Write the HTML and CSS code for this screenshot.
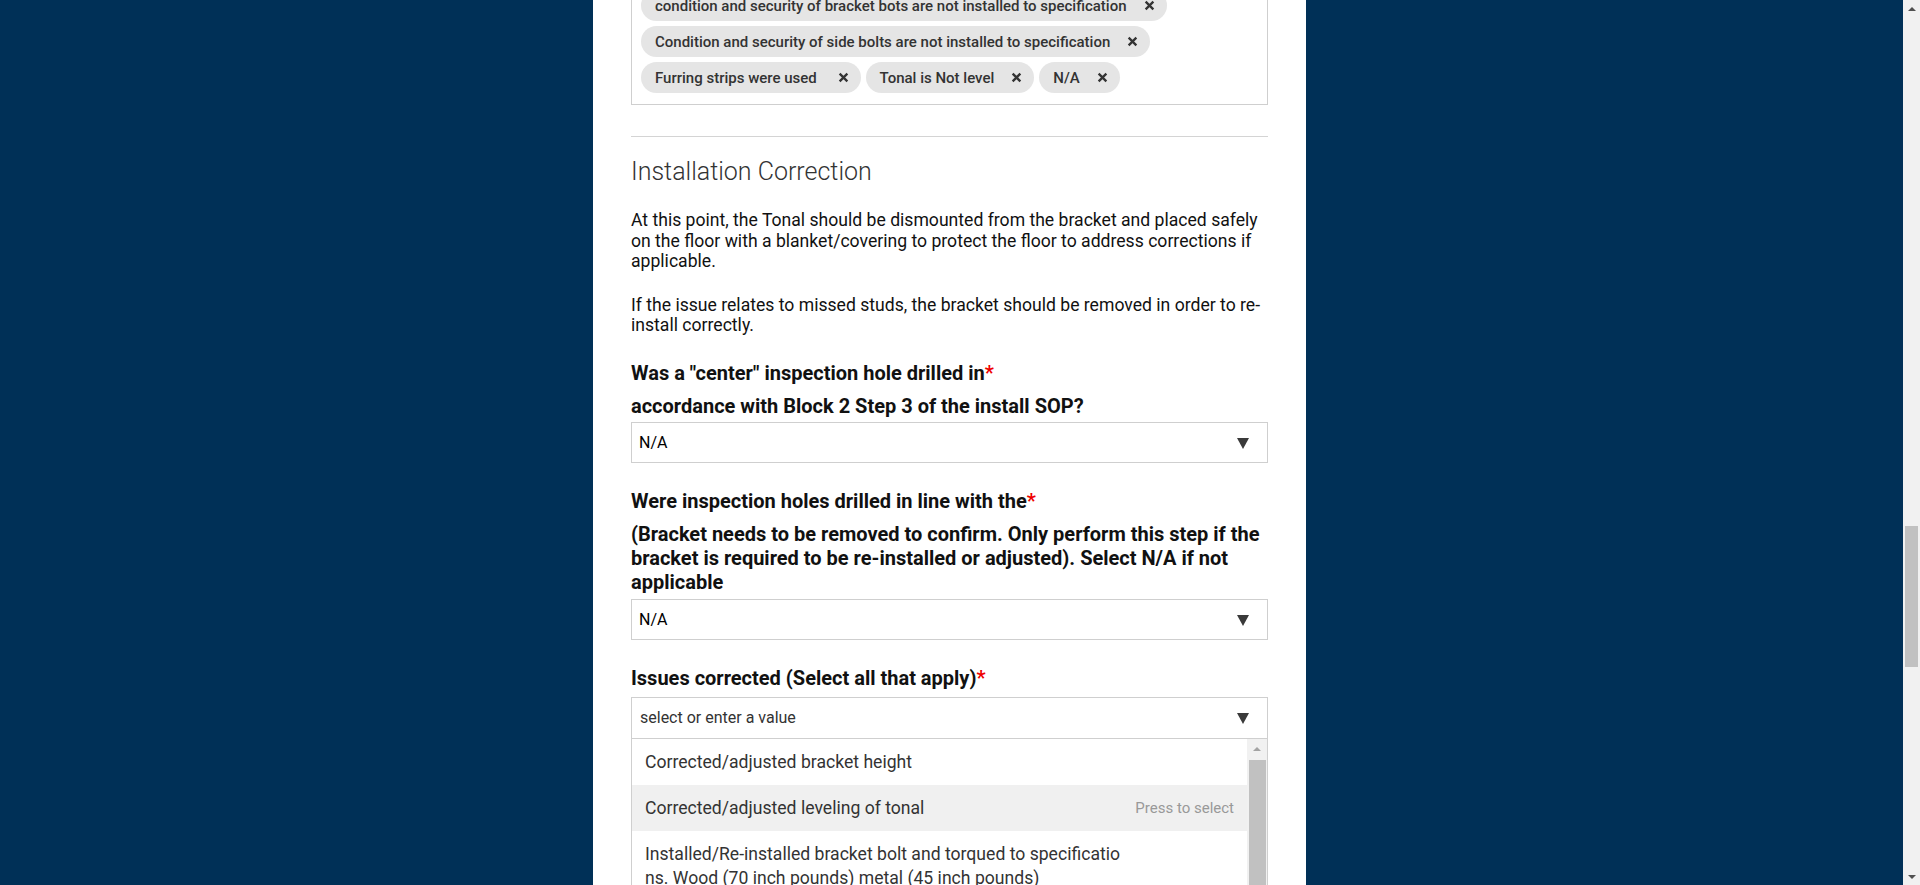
FILE: index.html
```html
<!DOCTYPE html>
<html lang="en">
<head>
<meta charset="utf-8">
<title>Installation Correction</title>
<link rel="stylesheet" href="styles.css">
</head>
<body>
<div class="page">
  <main class="panel">
    <div class="chipbox">
      <span class="chip">condition and security of bracket bots are not installed to specification<svg class="x" viewBox="0 0 10 10"><path d="M1.5 1.5L8.5 8.5M8.5 1.5L1.5 8.5"/></svg></span>
      <span class="chip">Condition and security of side bolts are not installed to specification<svg class="x" viewBox="0 0 10 10"><path d="M1.5 1.5L8.5 8.5M8.5 1.5L1.5 8.5"/></svg></span>
      <span class="chip">Furring strips were used&nbsp;<svg class="x" viewBox="0 0 10 10"><path d="M1.5 1.5L8.5 8.5M8.5 1.5L1.5 8.5"/></svg></span>
      <span class="chip">Tonal is Not level<svg class="x" viewBox="0 0 10 10"><path d="M1.5 1.5L8.5 8.5M8.5 1.5L1.5 8.5"/></svg></span>
      <span class="chip">N/A<svg class="x" viewBox="0 0 10 10"><path d="M1.5 1.5L8.5 8.5M8.5 1.5L1.5 8.5"/></svg></span>
    </div>

    <hr class="divider">

    <h2 class="section-title">Installation Correction</h2>
    <p class="intro">At this point, the Tonal should be dismounted from the bracket and placed safely on the floor with a blanket/covering to protect the floor to address corrections if applicable.</p>
    <p class="intro">If the issue relates to missed studs, the bracket should be removed in order to re-install correctly.</p>

    <div class="field">
      <div class="label">Was a "center" inspection hole drilled in<span class="req">*</span></div>
      <div class="desc">accordance with Block 2 Step 3 of the install SOP?</div>
      <div class="select"><span class="value">N/A</span><span class="arrow"></span></div>
    </div>

    <div class="field">
      <div class="label">Were inspection holes drilled in line with the<span class="req">*</span></div>
      <div class="desc">(Bracket needs to be removed to confirm. Only perform this step if the bracket is required to be re-installed or adjusted). Select N/A if not applicable</div>
      <div class="select"><span class="value">N/A</span><span class="arrow"></span></div>
    </div>

    <div class="field">
      <div class="label">Issues corrected (Select all that apply)<span class="req">*</span></div>
      <div class="select open"><span class="placeholder">select or enter a value</span><span class="arrow"></span></div>
      <div class="dropdown">
        <ul class="options">
          <li class="option">Corrected/adjusted bracket height</li>
          <li class="option active">Corrected/adjusted leveling of tonal<span class="hint">Press to select</span></li>
          <li class="option">Installed/Re-installed bracket bolt and torqued to specifications. Wood (70 inch pounds) metal (45 inch pounds)</li>
          <li class="option">Installed/Re-installed side bolts and torqued to specifications</li>
          <li class="option">N/A</li>
        </ul>
        <div class="list-scroll" aria-hidden="true">
          <span class="sb-btn"><span class="tri-up small"></span></span>
          <span class="list-thumb"></span>
        </div>
      </div>
    </div>
  </main>
</div>
<div class="page-scroll" aria-hidden="true">
  <span class="sb-btn page-btn"><span class="tri-up"></span></span>
  <div class="page-track"><span class="page-thumb"></span></div>
  <span class="sb-btn page-btn"><span class="tri-down"></span></span>
</div>
</body>
</html>
```

FILE: styles.css
```css
html,
body {
  height: 100%;
}

body {
  margin: 0;
  display: flex;
  background: #003057;
  font-family: Roboto, "Liberation Sans", Arial, sans-serif;
  color: #111;
  overflow: hidden;
}

.page {
  flex: 1;
  height: 100vh;
  overflow: hidden;
}

.panel {
  box-sizing: border-box;
  width: 713px;
  min-height: 100%;
  margin-left: calc(50% - 358.5px);
  padding: 0 38px;
  background: #fff;
}

/* chips multi-select */
.chipbox {
  margin-top: -21px;
  border: 1px solid #cfcfcf;
  padding: 10px 9px 11px;
  display: flex;
  flex-wrap: wrap;
  gap: 5px;
}

.chip {
  display: inline-flex;
  align-items: center;
  height: 31px;
  padding: 0 12px 0 14px;
  border-radius: 16px;
  background: #e5e5e5;
  font-size: 15px;
  font-weight: 500;
  color: #333;
  white-space: nowrap;
}

.chip .x {
  width: 11px;
  height: 11px;
  margin-left: 17px;
  fill: none;
  stroke: #333;
  stroke-width: 2.1;
}

.divider {
  border: 0;
  border-top: 1px solid #d4d4d4;
  margin: 31px 0 0;
}

.section-title {
  margin: 20px 0 0;
  font-size: 25px;
  line-height: 29px;
  font-weight: 300;
  color: #333;
}

.intro {
  margin: 24px 0 0;
  font-size: 17.6px;
  line-height: 20.5px;
  color: #111;
}

.intro + .intro {
  margin-top: 23px;
}

.field {
  margin-top: 26px;
}

.intro + .field {
  margin-top: 25px;
}

.label,
.desc {
  font-size: 20px;
  line-height: 24px;
  font-weight: 700;
  color: #111;
}

.label {
  margin-bottom: 7px;
}

.desc {
  margin: 9px 0 4.5px;
}

.req {
  color: #e00;
}

.select {
  box-sizing: border-box;
  height: 41px;
  border: 1px solid #cfcfcf;
  display: flex;
  align-items: center;
  justify-content: space-between;
  padding: 0 18px 0 7px;
  font-size: 16px;
  color: #000;
}

.select.open {
  border-bottom: 0;
  padding-left: 8px;
}

.placeholder {
  color: #333;
}

.arrow {
  width: 0;
  height: 0;
  border-left: 6px solid transparent;
  border-right: 6px solid transparent;
  border-top: 11px solid #3a3a3a;
  margin-top: 2px;
}

/* open dropdown list */
.dropdown {
  display: flex;
  height: 280px;
  border: 1px solid #cfcfcf;
}

.options {
  flex: 1;
  list-style: none;
  margin: 0;
  padding: 0;
  overflow: hidden;
}

.option {
  position: relative;
  padding: 11px 122px 11px 13px;
  font-size: 17.6px;
  line-height: 24px;
  color: #333;
  word-break: break-all;
}

.option.active {
  background: #f0f0f0;
}

.hint {
  position: absolute;
  right: 13px;
  top: 11px;
  font-size: 15px;
  line-height: 24px;
  color: #999;
}

.list-scroll {
  width: 20px;
  display: flex;
  flex-direction: column;
  align-items: stretch;
  background: #f1f1f1;
}

.sb-btn {
  height: 21px;
  display: flex;
  align-items: center;
  justify-content: center;
  flex: none;
}

.list-thumb {
  flex: 1;
  margin: 0 1px 0 2px;
  background: #c1c1c1;
}

.tri-up,
.tri-down {
  width: 0;
  height: 0;
  border-left: 4px solid transparent;
  border-right: 4px solid transparent;
}

.tri-up {
  border-bottom: 4px solid #505050;
}

.tri-down {
  border-top: 4px solid #505050;
}

.tri-up.small {
  border-bottom-color: #a3a3a3;
}

/* page scrollbar */
.page-scroll {
  width: 17px;
  flex: none;
  height: 100vh;
  display: flex;
  flex-direction: column;
  background: #f1f1f1;
}

.page-btn {
  height: 17px;
}

.page-track {
  flex: 1;
  padding: 0 2px;
}

.page-thumb {
  display: block;
  margin-top: 509px;
  height: 141px;
  background: #c1c1c1;
}
```
